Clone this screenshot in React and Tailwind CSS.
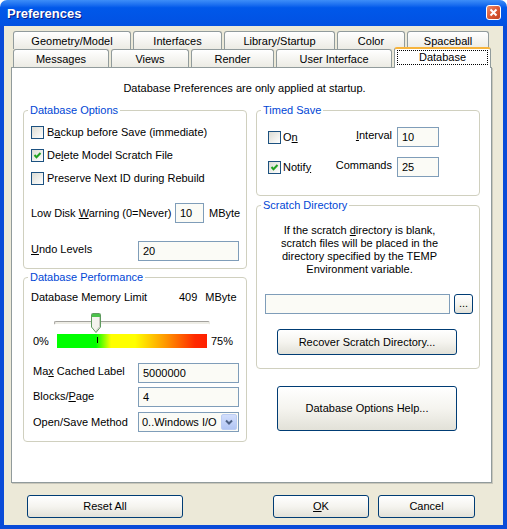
import React from 'react';

const tabsTop = [
  { label: 'Geometry/Model', w: 'w-[118px]' },
  { label: 'Interfaces', w: 'w-[89px]' },
  { label: 'Library/Startup', w: 'w-[111px]' },
  { label: 'Color', w: 'w-[68px]' },
  { label: 'Spaceball', w: 'w-[82px]' },
];

const tabsBottom = [
  { label: 'Messages', w: 'w-[96px]' },
  { label: 'Views', w: 'w-[78px]' },
  { label: 'Render', w: 'w-[83px]' },
  { label: 'User Interface', w: 'w-[116px]' },
];

function Tab({ label, w }) {
  return (
    <div className={`${w} h-[18px] border border-b-0 border-[#919b9c] rounded-t-[3px] bg-linear-to-b from-white to-[#ecebe4] flex items-center justify-center pt-[1px]`}>
      {label}
    </div>
  );
}

function Checkbox({ checked }) {
  return (
    <span className="w-[13px] h-[13px] border border-[#1c5180] bg-linear-to-br from-[#dcdcd4] to-white flex items-center justify-center shrink-0">
      {checked && (
        <svg width="9" height="9" viewBox="0 0 9 9">
          <path d="M1.5 4 L3.5 6.2 L7.5 2" stroke="#21a121" strokeWidth="2" fill="none" />
        </svg>
      )}
    </span>
  );
}

function TextBox({ value, className }) {
  return (
    <div className={`h-[20px] border border-[#7f9db9] bg-[#fbfbf6] pl-[4px] flex items-center ${className}`}>
      {value}
    </div>
  );
}

function Btn({ children, className }) {
  return (
    <div className={`border border-[#003c74] rounded-[3px] bg-linear-to-b from-white via-[#f5f4ef] to-[#e2e1d8] flex items-center justify-center ${className}`}>
      {children}
    </div>
  );
}

function Group({ title, className, children }) {
  return (
    <div className={`relative border border-[#d0d0bf] rounded-[4px] ${className}`}>
      <span className="absolute -top-[7px] left-[4px] bg-white px-[2px] leading-[13px] text-[#0046d5]">{title}</span>
      {children}
    </div>
  );
}

export default function App() {
  return (
    <div className="w-[507px] h-[529px] bg-white flex flex-col font-['Liberation_Sans',Arial,sans-serif] text-[11px] leading-[13px] text-black">
      {/* Title bar */}
      <div className="h-[26px] rounded-t-[7px] bg-linear-to-b from-[#3d8ef8] via-[#0058ea] via-30% to-[#0251e2] flex items-start shrink-0">
        <span className="ml-[7px] mt-[6px] text-white font-bold text-[13px] leading-[15px] [text-shadow:1px_1px_#0a1883]">
          Preferences
        </span>
        <div className="ml-auto mr-[6px] mt-[5px] w-[15px] h-[15px] rounded-[3px] border border-white bg-linear-to-br from-[#ec8a6a] via-[#dc5a35] to-[#c0401e] flex items-center justify-center">
          <svg width="9" height="9" viewBox="0 0 9 9">
            <path d="M1.5 1.5 L7.5 7.5 M7.5 1.5 L1.5 7.5" stroke="white" strokeWidth="2" />
          </svg>
        </div>
      </div>

      {/* Body */}
      <div className="flex-1 bg-[#ece9d8] border-x-4 border-b-4 border-[#0a4bd8] flex flex-col">
        <div className="pt-[5px] pl-[9px]">
          {/* Tabs */}
          <div className="flex gap-[2px] h-[18px]">
            {tabsTop.map((t) => (
              <Tab key={t.label} {...t} />
            ))}
          </div>
          <div className="flex gap-[2px] h-[20px] -mt-[2px] items-end">
            {tabsBottom.map((t) => (
              <Tab key={t.label} {...t} />
            ))}
            <div className="relative z-10 w-[97px] h-[21px] -mb-[1px] bg-white border border-b-0 border-[#919b9c] border-t-2 border-t-[#f7b43c] rounded-t-[3px] flex">
              <div className="flex-1 mx-[2px] mt-[1px] mb-[3px] border border-dotted border-black flex items-center justify-center">
                Database
              </div>
            </div>
          </div>
        </div>

        {/* Page */}
        <div className="ml-[7px] w-[481px] h-[416px] bg-white border border-[#919b9c] shadow-[1px_1px_0_#c9c7ba] flex flex-col">
          <div className="pt-[14px] pr-[14px] text-center">Database Preferences are only applied at startup.</div>

          <div className="flex gap-[9px] pl-[11px] mt-[15px]">
            {/* Left column */}
            <div className="w-[224px] flex flex-col">
              <Group title="Database Options" className="h-[159px] pt-[10px]">
                <div className="h-[23px] pl-[7px] flex items-center">
                  <Checkbox />
                  <span className="ml-[3px]">B<u>a</u>ckup before Save (immediate)</span>
                </div>
                <div className="h-[23px] pl-[7px] flex items-center">
                  <Checkbox checked />
                  <span className="ml-[3px]">De<u>l</u>ete Model Scratch File</span>
                </div>
                <div className="h-[23px] pl-[7px] flex items-center">
                  <Checkbox />
                  <span className="ml-[3px]">Preserve Next ID during Rebuild</span>
                </div>
                <div className="mt-[13px] h-[20px] pl-[7px] flex items-center">
                  <span className="w-[144px]">Low Disk <u>W</u>arning (0=Never)</span>
                  <TextBox value="10" className="w-[29px]" />
                  <span className="ml-[5px]">MByte</span>
                </div>
                <div className="mt-[18px] h-[20px] pl-[7px] flex items-center">
                  <span className="w-[107px] -mt-[3px]"><u>U</u>ndo Levels</span>
                  <TextBox value="20" className="w-[101px]" />
                </div>
              </Group>

              <Group title="Database Performance" className="mt-[8px] h-[165px] pt-[13px]">
                <div className="pl-[7px] flex">
                  <span className="w-[148px]">Database Memory Limit</span>
                  <span>409</span>
                  <span className="ml-[8px]">MByte</span>
                </div>
                <div className="mt-[9px] h-[20px] ml-[30px] w-[156px] relative flex items-center">
                  <div className="w-full h-[4px] rounded-[2px] border border-[#a3a29d] border-b-white border-r-[#e8e7e0] bg-[#eeede6]" />
                  <svg className="absolute left-[36px] top-0" width="12" height="21" viewBox="0 0 12 21">
                    <path d="M1.5 1.5 Q1.5 0.5 2.5 0.5 H9.5 Q10.5 0.5 10.5 1.5 V14 L6 19.5 L1.5 14 Z" fill="#f4f3ee" stroke="#5e9a5e" />
                    <rect x="2" y="1" width="8" height="3" fill="#4bc24b" />
                    <path d="M9.5 4 V13.6 L6 18" stroke="#c9c8c0" fill="none" />
                  </svg>
                </div>
                <div className="mt-[1px] h-[14px] pl-[9px] flex items-center">
                  <span className="w-[24px]">0%</span>
                  <div className="relative w-[150px] h-[14px] bg-[linear-gradient(to_right,#00ff00_0%,#00ff00_26%,#ffff00_36%,#ffff00_52%,#ff9900_72%,#ff2a00_92%,#ff2000_100%)]">
                    <div className="absolute left-[40px] top-[3px] w-[1px] h-[6px] bg-black" />
                  </div>
                  <span className="ml-[4px]">75%</span>
                </div>
                <div className="mt-[15px] h-[20px] pl-[9px] flex items-center">
                  <span className="w-[105px] -mt-[3px]">Ma<u>x</u> Cached Label</span>
                  <TextBox value="5000000" className="w-[101px]" />
                </div>
                <div className="mt-[4px] h-[20px] pl-[9px] flex items-center">
                  <span className="w-[105px] -mt-[2px]">Blocks/<u>P</u>age</span>
                  <TextBox value="4" className="w-[101px]" />
                </div>
                <div className="mt-[5px] h-[20px] pl-[9px] flex items-center">
                  <span className="w-[105px]">Open/Save Method</span>
                  <div className="w-[101px] h-[20px] border border-[#7f9db9] bg-[#fbfbf6] flex items-center">
                    <span className="flex-1 pl-[3px]">0..Windows I/O</span>
                    <div className="w-[16px] h-[16px] mr-[1px] rounded-[2px] border border-[#bccdf3] bg-linear-to-b from-[#d2defc] to-[#b2c6f4] flex items-center justify-center">
                      <svg width="8" height="6" viewBox="0 0 8 6">
                        <path d="M1 1.5 L4 4.5 L7 1.5" stroke="#4d6185" strokeWidth="2" fill="none" />
                      </svg>
                    </div>
                  </div>
                </div>
              </Group>
            </div>

            {/* Right column */}
            <div className="w-[224px] flex flex-col">
              <Group title="Timed Save" className="h-[86px] pt-[16px]">
                <div className="h-[20px] pl-[11px] flex items-center">
                  <div className="w-[60px] flex items-center">
                    <Checkbox />
                    <span className="ml-[2px]">O<u>n</u></span>
                  </div>
                  <span className="w-[64px] text-right -mt-[3px]"><u>I</u>nterval</span>
                  <TextBox value="10" className="ml-[5px] w-[42px]" />
                </div>
                <div className="mt-[10px] h-[20px] pl-[11px] flex items-center">
                  <div className="w-[60px] flex items-center">
                    <Checkbox checked />
                    <span className="ml-[2px]">Notif<u>y</u></span>
                  </div>
                  <span className="w-[64px] text-right -mt-[3px]">Commands</span>
                  <TextBox value="25" className="ml-[5px] w-[42px]" />
                </div>
              </Group>

              <Group title="Scratch Directory" className="mt-[9px] h-[164px] pt-[18px]">
                <div className="ml-[8px] w-[189px] text-center">
                  If the scratch <u>d</u>irectory is blank,
                  <br />
                  scratch files will be placed in the
                  <br />
                  directory specified by the TEMP
                  <br />
                  Environment variable.
                </div>
                <div className="mt-[18px] ml-[8px] flex">
                  <div className="w-[185px] h-[20px] border border-[#7f9db9] bg-[#fbfbf6]" />
                  <Btn className="ml-[4px] w-[19px] h-[20px] pb-[2px]">...</Btn>
                </div>
                <Btn className="mt-[15px] ml-[20px] w-[180px] h-[26px]">Recover Scratch Directory...</Btn>
              </Group>

              <Btn className="mt-[17px] ml-[21px] w-[180px] h-[45px]">Database Options Help...</Btn>
            </div>
          </div>
        </div>

        {/* Bottom buttons */}
        <div className="mt-[12px] flex">
          <Btn className="ml-[23px] w-[156px] h-[23px]">Reset All</Btn>
          <Btn className="ml-[90px] w-[96px] h-[23px]"><span><u>O</u>K</span></Btn>
          <Btn className="ml-[9px] w-[97px] h-[23px]">Cancel</Btn>
        </div>
      </div>
    </div>
  );
}
